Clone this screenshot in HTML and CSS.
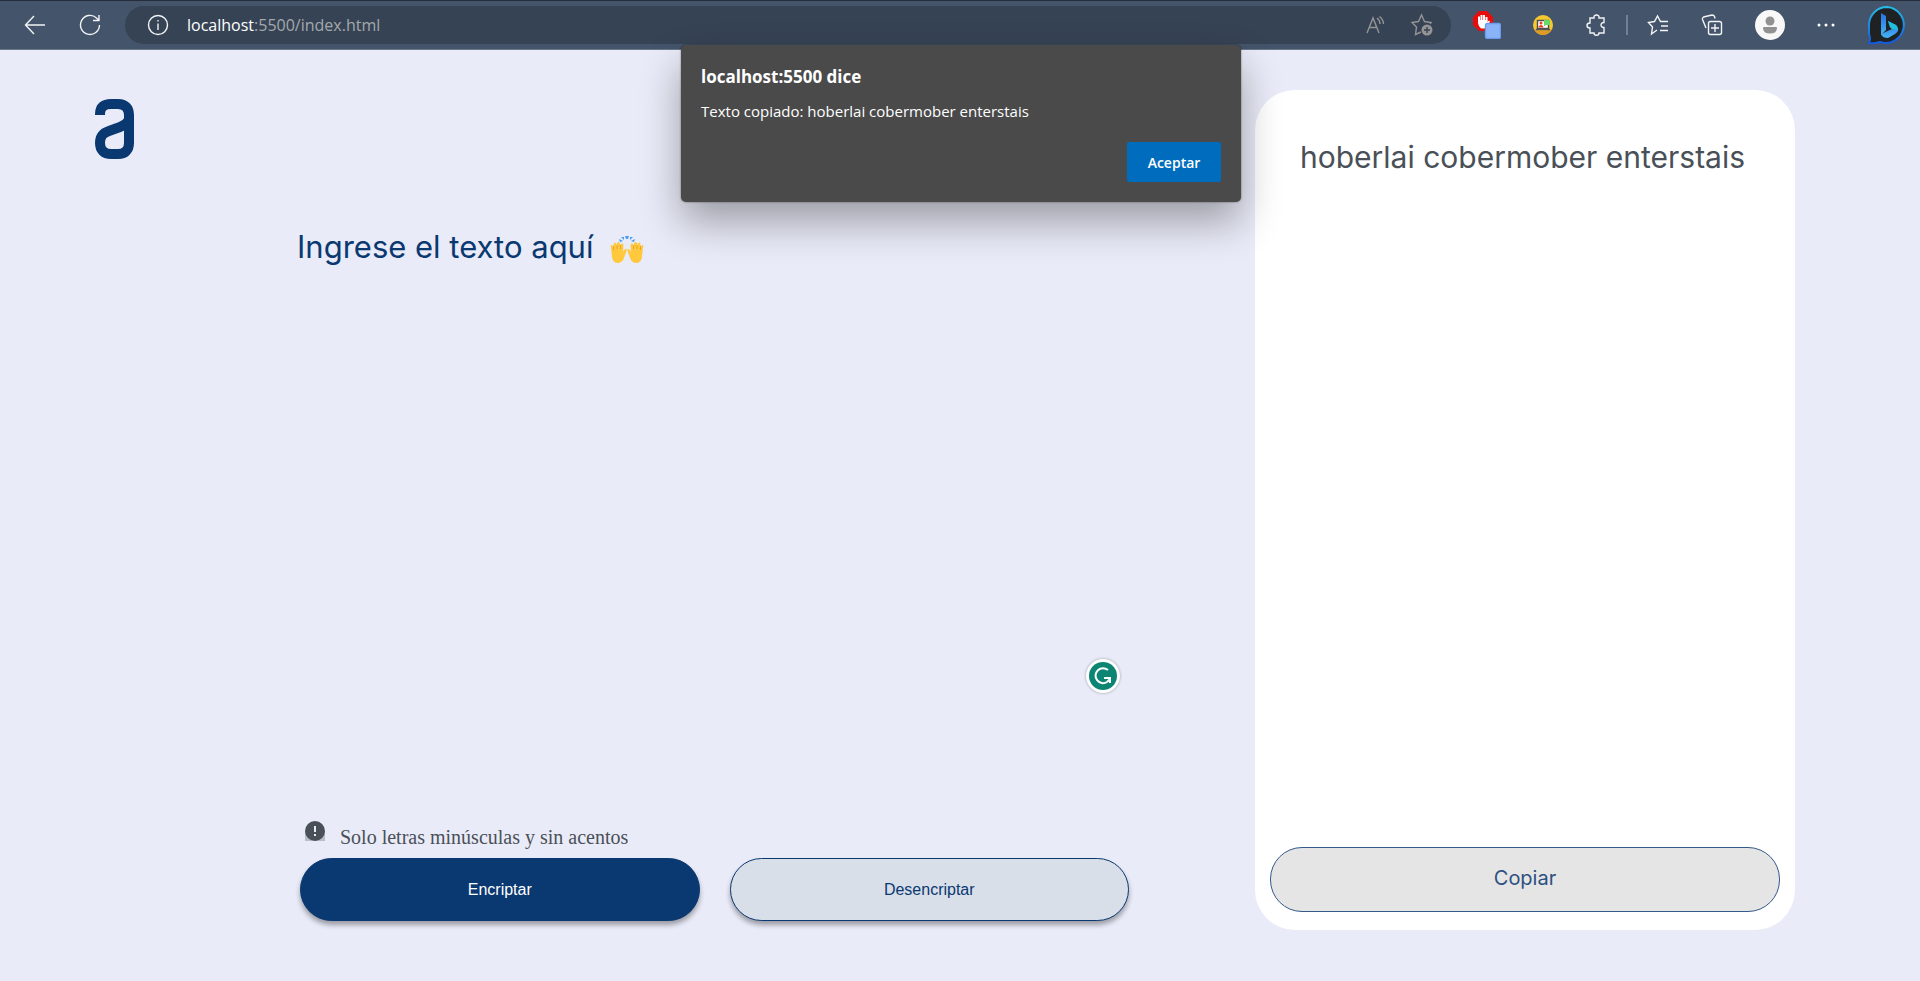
FILE: index.html
```html
<!DOCTYPE html>
<html lang="es">
<head>
<meta charset="utf-8">
<title>Encriptador de texto</title>
<link rel="stylesheet" href="styles.css">
</head>
<body>
<header class="toolbar">
  <button class="tool back" aria-label="Atrás"><svg width="22" height="22" viewBox="0 0 22 22"><path d="M21 11H2M10 2L1.500 11L10 20"/></svg></button>
  <button class="tool reload" aria-label="Actualizar"><svg width="22" height="22" viewBox="0 0 22 22"><path d="M20.500 11A9.500 9.500 0 1 1 17.500 4L20 6.500M20 1V6.500H14"/></svg></button>
  <div class="address">
    <svg width="22" height="22" viewBox="0 0 22 22"><circle cx="11" cy="11" r="9.500"/><path d="M11 9.500V16M11 6V7.500"/></svg>
    <a class="url" href="#"><span class="host">localhost</span>:5500/index.html</a>
    <button class="tool dim" aria-label="Leer en voz alta"><svg width="22" height="22" viewBox="0 0 22 22"><path d="M1 19L7 4L13 19M3 13.500H11M11 4C13 5.500 14 8 14 10M13.500 2.500C16 4.500 17.500 7 17.500 10"/></svg></button>
    <button class="tool dim" aria-label="Agregar a favoritos"><svg width="24" height="24" viewBox="0 0 24 24"><path d="M11 19L5.500 21.500L6.500 14L2 9.500L8.500 8.500L11.500 2L14.500 8.500L21 9.500L20 11"/><circle cx="17" cy="17" r="5.500" fill="#949494" stroke="none"/><path d="M17 14V20M14 17H20" stroke="#364354"/></svg></button>
  </div>
  <nav class="extensions" aria-label="Extensiones">
    <button class="tool" aria-label="Bloqueador de anuncios"><svg width="28" height="28" viewBox="0 0 28 28"><path d="M6 0H14L20 6V14L14 20H6L0 14V6Z" fill="#e80c0d" stroke="none"/><path d="M6 11V5.500M8.500 10V4M11 10V4M13.500 10V6" stroke="#fff" stroke-width="2"/><path d="M5 9H14.500V11L16 9.500L17 10.500L14 15Q13 17.500 11 17.500H8Q5.500 16 5 12Z" fill="#fff" stroke="none"/><rect x="12.500" y="12.500" width="15" height="15" rx="2" fill="#8ab4f8" stroke="#6b9cec"/></svg></button>
    <button class="tool" aria-label="Extensión de presentaciones"><svg width="20" height="20" viewBox="0 0 20 20"><circle cx="10" cy="10" r="10" fill="#f5c832" stroke="none"/><path d="M1 14Q10 17 19 14Q16 20 10 20Q4 20 1 14Z" fill="#e09a26" stroke="none"/><rect x="4.500" y="5.500" width="11" height="8" fill="#fff" stroke="#504d50"/><path d="M3 14.500H17" stroke="#555" stroke-width="1.500"/><circle cx="8" cy="8" r="1.500" fill="#e54427" stroke="none"/><path d="M5.500 12.500C5.500 9 10.500 9 10.500 12.500Z" fill="#e54427" stroke="none"/><path d="M11 5H17V10H13L11 11.500Z" fill="#68d965" stroke="none"/></svg></button>
    <button class="tool" aria-label="Extensiones"><svg width="22" height="22" viewBox="0 0 22 22"><path d="M5 4H9C8 0 15 0 14 4H19V8.500C15 8 15 14 19 13.500V19H14C14 22 9 22 9 19H5V14C1 14 1 9 5 9Z"/></svg></button>
    <span class="divider"></span>
    <button class="tool" aria-label="Favoritos"><svg width="22" height="22" viewBox="0 0 22 22"><path d="M10 16L4.500 20L5.500 13L1.500 8.500L7.500 7.500L10.500 2L13.500 7.500H21M14 12H21M13 16.500H21"/></svg></button>
    <button class="tool" aria-label="Colecciones"><svg width="22" height="22" viewBox="0 0 22 22"><rect x="7.500" y="7.500" width="13" height="13" rx="2"/><path d="M14 10V18M10 14H18M5 14L1.500 5.500Q1 4 2.500 3L11 1Q13 1 13.500 2.500L14 4.500"/></svg></button>
    <button class="tool" aria-label="Perfil"><svg class="filled" width="30" height="30" viewBox="0 0 30 30"><circle cx="15" cy="15" r="15" fill="#f8f8f8"/><circle cx="15" cy="11" r="4.500" fill="#919191"/><path d="M8 18Q8 17 9 17H21Q22 17 22 18Q22 23.500 15 23.500T8 18Z" fill="#919191"/></svg></button>
    <button class="tool" aria-label="Más opciones"><svg class="filled" width="18" height="6" viewBox="0 0 18 6"><g fill="#fff"><circle cx="2" cy="3" r="1.500"/><circle cx="9" cy="3" r="1.500"/><circle cx="16" cy="3" r="1.500"/></g></svg></button>
    <button class="tool" aria-label="Bing"><svg width="40" height="40" viewBox="0 0 40 40"><defs><linearGradient id="rim" x1="0" y1="0" x2="0" y2="1"><stop offset="0" stop-color="#24bce8"/><stop offset="1" stop-color="#1458dc"/></linearGradient><linearGradient id="bing" x1="0" y1="0" x2="0" y2="1"><stop offset="0" stop-color="#2870df"/><stop offset="1" stop-color="#45b3f4"/></linearGradient></defs><path d="M20 2A18 18 0 1 1 13 37Q7 39 2 38Q4 34 2 29V19A18 18 0 0 1 20 2Z" fill="#202123" stroke="url(#rim)" stroke-width="2"/><path d="M14 8L19 11V25L14 30Z" fill="url(#bing)" stroke="none"/><path d="M21 16L29 20Q34 25 28 29L21 33Q15 33 14 29L25 24L23 22Z" fill="url(#bing)" stroke="none"/><path d="M21 16L29 20Q31 22 31 25L25 24L23 22Z" fill="#22bfda" stroke="none"/></svg></button>
  </nav>
</header>

<main class="page">
  <a class="logo" href="#" aria-label="Inicio"><svg width="39" height="60" viewBox="0 0 39 60"><path d="M5 16V15C5 8 9 5 16 5H23C30 5 34 9 34 16V44C34 51 30 55 23 55H16C9 55 5 51 5 44C5 37 8 34 14 32L25 28Q31 26 34 21" fill="none" stroke="#0a3871" stroke-width="10"/></svg></a>

  <section class="editor">
    <div class="field">
      <textarea class="input" aria-label="Texto" placeholder="Ingrese el texto aquí"></textarea>
      <svg class="hands" width="34" height="28" viewBox="0 0 34 28"><g fill="#ffc83d"><path id="hand" d="M1 11Q0 9 1.500 9Q3 9 3.500 13L3.500 8Q5 5 6.500 8L7 11V7Q8.500 5 10 7V12L11 8Q12.500 6 13.500 9L13 16Q15 12 16.500 13Q17 15 15 19Q13 27 8 27Q3 27 2 21Z"/><use href="#hand" transform="translate(34 0) scale(-1 1)"/></g><path id="creases" d="M3.500 10V14M7 9V13M10.500 9V13" fill="none" stroke="#e5a526"/><use href="#creases" transform="translate(34 0) scale(-1 1)"/><path d="M15 0H19L18 3H16ZM11 1L14 1L14 4ZM23 1L20 1L20 4ZM9 3L13 5L10 6ZM25 3L21 5L24 6Z" fill="#4a9df5"/></svg>
      <button class="grammarly" aria-label="Grammarly"><svg width="28" height="28" viewBox="0 0 28 28"><circle cx="14" cy="14" r="14" fill="#0c8573"/><path d="M19 8A7.500 7.500 0 1 0 18 20L21 17M15 16H21V21" fill="none" stroke="#fff" stroke-width="2"/></svg></button>
    </div>
    <p class="note">
      <svg width="20" height="20" viewBox="0 0 20 20"><path d="M0 10H20V20H0Z" fill="#b9bcca"/><circle cx="10" cy="10" r="10" fill="#495057"/><path d="M10 5V11M10 13V15" stroke="#e9ebf8" stroke-width="2"/></svg>
      <span>Solo letras minúsculas y sin acentos</span>
    </p>
    <div class="actions">
      <button class="action primary">Encriptar</button>
      <button class="action secondary">Desencriptar</button>
    </div>
  </section>

  <aside class="result">
    <p class="output">hoberlai cobermober enterstais</p>
    <button class="copy">Copiar</button>
  </aside>
</main>

<div class="alert" role="alertdialog" aria-labelledby="alert-title" aria-describedby="alert-text">
  <h1 class="alert-title" id="alert-title">localhost:5500 dice</h1>
  <p class="alert-text" id="alert-text">Texto copiado: hoberlai cobermober enterstais</p>
  <button class="accept">Aceptar</button>
</div>
</body>
</html>
```
FILE: styles.css
```css
* {
  box-sizing: border-box;
}

body {
  margin: 0;
  display: flex;
  flex-direction: column;
  min-height: 100vh;
  background: #e9ebf8;
}

button {
  padding: 0;
  border: 0;
  cursor: pointer;
}

p {
  margin: 0;
}

svg {
  display: block;
  flex: none;
}

/* Browser toolbar */
.toolbar {
  display: flex;
  align-items: center;
  height: 50px;
  padding: 0 13px 0 24px;
  border-top: 1px solid #252d3a;
  border-bottom: 1px solid #6a7789;
  background: #44546a;
  font-family: "Open Sans", "Noto Sans", sans-serif;
}

.toolbar svg {
  fill: none;
  stroke: #f2f4f6;
  stroke-width: 1.4;
}

.toolbar .filled {
  stroke: none;
}

.tool {
  display: flex;
  background: none;
}

.reload {
  margin: 0 24px 0 33px;
}

.address {
  display: flex;
  flex: 1;
  align-items: center;
  gap: 22px;
  height: 38px;
  padding: 0 17px 0 22px;
  border-radius: 19px;
  background: #364354;
}

.url {
  flex: 1;
  margin-left: -4px;
  color: #a4a8ad;
  font-size: 16px;
  line-height: 24px;
  text-decoration: none;
}

.host {
  color: #fff;
}

.toolbar .dim svg {
  stroke: #949494;
}

.extensions {
  display: flex;
  align-items: center;
  gap: 32px;
  margin-left: 22px;
}

.divider {
  width: 2px;
  height: 20px;
  margin: 0 -13px;
  background: #748092;
}

/* Page */
.page {
  display: grid;
  flex: 1;
  grid-template-columns: 205fr 955fr 540fr;
  padding: 40px 125px 51px 95px;
}

.logo {
  padding-top: 9px;
}

.editor {
  display: flex;
  flex-direction: column;
  padding: 131px 126px 9px 0;
}

.field {
  position: relative;
  display: flex;
  flex: 1;
  margin-left: -3px;
}

.input {
  flex: 1;
  padding: 7px 0 0;
  border: 0;
  outline: 0;
  background: none;
  color: #0a3871;
  font: 400 31px/38px Inter, sans-serif;
  resize: none;
}

.input::placeholder {
  color: #0a3871;
  opacity: 1;
}

.hands {
  position: absolute;
  top: 15px;
  left: 313px;
}

.grammarly {
  position: absolute;
  right: 9px;
  bottom: 128px;
  display: grid;
  place-items: center;
  width: 34px;
  height: 34px;
  border-radius: 50%;
  background: #fff;
  box-shadow: 0 0 3px #0005;
}

.note {
  display: flex;
  gap: 15px;
  padding: 0 0 7px 5px;
  color: #495057;
  font: 20px/28px "Liberation Serif", serif;
}

.note span {
  padding-top: 2px;
}

.actions {
  display: grid;
  grid-template-columns: 1fr 1fr;
  gap: 30px;
}

.action {
  height: 63px;
  border: 1px solid #0a3871;
  border-radius: 32px;
  box-shadow: 0 4px 5px #0005;
  font: 16px "Liberation Sans", sans-serif;
}

.primary {
  background: #0a3871;
  color: #fff;
}

.secondary {
  background: #d8dfe8;
  color: #0a3871;
}

.result {
  display: flex;
  flex-direction: column;
  justify-content: space-between;
  padding: 48px 15px 18px;
  border-radius: 40px;
  background: #fff;
}

.output {
  padding: 0 30px;
  color: #495057;
  font: 400 30px/38px Inter, sans-serif;
}

.copy {
  height: 65px;
  padding-bottom: 3px;
  border: 1px solid #34598a;
  border-radius: 32px;
  background: #e5e5e5;
  color: #2c5081;
  font: 20px Inter, sans-serif;
}

/* Alert */
.alert {
  position: absolute;
  top: 45px;
  left: calc(50% + 1px);
  display: flex;
  flex-direction: column;
  width: 560px;
  padding: 20px;
  border-radius: 5px;
  background: #4a4a4a;
  box-shadow: 0 0 2px #0008, 0 20px 40px #0005;
  color: #fff;
  font-family: "Open Sans", "Noto Sans", sans-serif;
  transform: translateX(-50%);
}

.alert-title {
  margin: 0;
  font-size: 17px;
  font-weight: 700;
  line-height: 24px;
}

.alert-text {
  margin: 12px 0 21px;
  font-size: 15px;
  line-height: 20px;
}

.accept {
  align-self: flex-end;
  width: 94px;
  height: 40px;
  border-radius: 2px;
  background: #006cbe;
  color: #fff;
  font: 600 14px "Open Sans", sans-serif;
}
```
